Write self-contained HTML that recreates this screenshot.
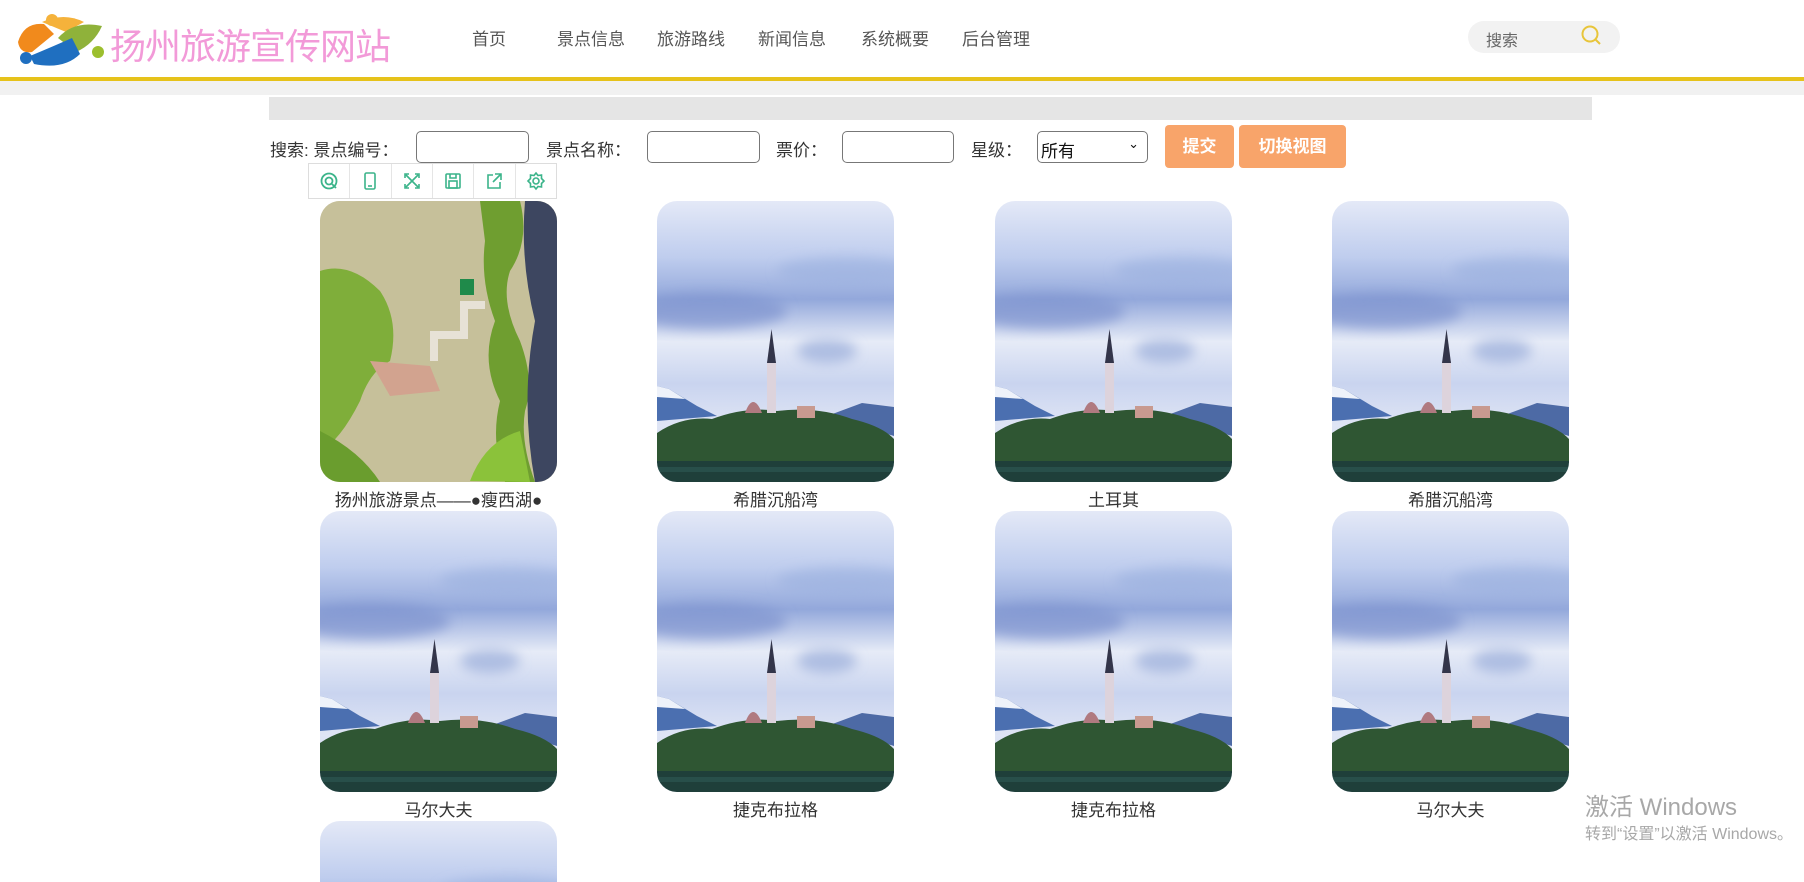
<!DOCTYPE html>
<html style="width:1804px;height:882px;overflow:hidden"><head><meta charset="utf-8"><style>
*{margin:0;padding:0;box-sizing:border-box}
html,body{width:1804px;height:882px;overflow:hidden}
body{background:#fff;font-family:"Liberation Sans","Noto Sans CJK SC",sans-serif;position:relative;color:#333}
.a{position:absolute}
.nav{top:25px;font-size:17px;color:#555}
.lbl{top:136px;font-size:17px;color:#333}
.inp{top:131px;height:32px;border:1px solid #777;border-radius:5px;background:#fff}
.btn{top:125px;height:43px;background:#f8a46a;color:#fff;font-weight:bold;font-size:17px;border-radius:4px;text-align:center;line-height:43px}
.card{width:237px;height:281px;border-radius:20px;overflow:hidden}
.cap{width:237px;text-align:center;font-size:17px;color:#333}
.tb{top:163px;left:308px;width:249px;height:36px;border:1px solid #ddd;background:#fff;display:flex}
.tb div{flex:1;border-right:1px solid #e5e5e5;display:flex;align-items:center;justify-content:center}
.tb div:last-child{border-right:none}
</style></head><body>
<svg width="0" height="0" style="position:absolute">
<defs>
<linearGradient id="sky" x1="0" y1="0" x2="0" y2="1">
<stop offset="0" stop-color="#e4e9f7"/><stop offset="0.2" stop-color="#bfcdee"/><stop offset="0.35" stop-color="#93a8db"/><stop offset="0.5" stop-color="#e6ebf7"/><stop offset="0.65" stop-color="#c9d4ef"/><stop offset="0.8" stop-color="#dfe5f5"/><stop offset="1" stop-color="#c3cfee"/>
</linearGradient>
<filter id="bl"><feGaussianBlur stdDeviation="6"/></filter>
<symbol id="lake" viewBox="0 0 237 281" preserveAspectRatio="none">
<rect width="237" height="281" fill="url(#sky)"/>
<g filter="url(#bl)">
<ellipse cx="50" cy="110" rx="80" ry="18" fill="#7d93cf" opacity=".7"/>
<ellipse cx="190" cy="70" rx="70" ry="14" fill="#9bb0df" opacity=".6"/>
<ellipse cx="170" cy="150" rx="30" ry="12" fill="#8ea3d6" opacity=".6"/>
</g>
<path d="M0 185 L12 188 L40 205 L60 215 L0 220Z" fill="#4b6fb0"/>
<path d="M0 185 L12 188 L28 198 L0 196Z" fill="#eef2fa"/>
<path d="M170 215 L205 202 L237 206 L237 235 Z" fill="#4d6aa5"/>
<path d="M0 232 Q25 215 55 218 Q90 205 120 210 Q160 205 195 218 Q225 225 237 238 L237 262 L0 262Z" fill="#2f5633"/>
<rect x="110" y="160" width="9" height="52" fill="#ddd3dc"/>
<path d="M110 162 L114.5 128 L119 162Z" fill="#33354a"/>
<path d="M88 212 Q96 190 105 212Z" fill="#b07a80"/>
<rect x="140" y="205" width="18" height="12" fill="#c89a90"/>
<rect x="0" y="260" width="237" height="21" fill="#1f3f3a"/>
<rect x="0" y="266" width="237" height="5" fill="#2e5a55" opacity=".6"/>
</symbol>
</defs></svg>

<svg class="a" style="left:14px;top:12px" width="94" height="58" viewBox="0 0 94 58">
<path d="M4 30 Q10 10 30 12 L40 22 L18 40 Q6 42 4 30Z" fill="#f18a1c"/>
<path d="M28 10 Q50 0 70 10 L52 20Z" fill="#f5b23b"/>
<path d="M44 26 Q60 8 88 14 Q80 32 62 40Z" fill="#8fb23a"/>
<path d="M16 44 Q40 34 58 26 L66 42 Q50 58 20 52Z" fill="#1f6fc0"/>
<circle cx="12" cy="46" r="6" fill="#1f6fc0"/><circle cx="84" cy="40" r="6" fill="#9cbf2e"/><circle cx="38" cy="8" r="6" fill="#f5b23b"/>
</svg>
<div class="a" style="left:110px;top:18px;font-size:36px;color:#f29ad8;letter-spacing:-1px">扬州旅游宣传网站</div>
<div class="a nav" style="left:472px">首页</div>
<div class="a nav" style="left:557px">景点信息</div>
<div class="a nav" style="left:657px">旅游路线</div>
<div class="a nav" style="left:758px">新闻信息</div>
<div class="a nav" style="left:861px">系统概要</div>
<div class="a nav" style="left:962px">后台管理</div>
<div class="a" style="left:1468px;top:21px;width:152px;height:32px;border-radius:16px;background:#f2f2f2"></div>
<div class="a" style="left:1486px;top:27px;font-size:16px;color:#666">搜索</div>
<svg class="a" style="left:1580px;top:24px" width="24" height="24" viewBox="0 0 24 24"><circle cx="10" cy="10" r="7.5" fill="none" stroke="#e8c53a" stroke-width="2"/><path d="M15.5 15.5 L20 20" stroke="#e8c53a" stroke-width="2"/></svg>
<div class="a" style="left:0;top:77px;width:1804px;height:4px;background:#e6c21a"></div>
<div class="a" style="left:0;top:81px;width:1804px;height:14px;background:#f1f1f1"></div>
<div class="a" style="left:269px;top:97px;width:1323px;height:23px;background:#e5e5e5"></div>

<div class="a lbl" style="left:270px">搜索: 景点编号：</div>
<div class="a inp" style="left:416px;width:113px"></div>
<div class="a lbl" style="left:546px">景点名称：</div>
<div class="a inp" style="left:647px;width:113px"></div>
<div class="a lbl" style="left:776px">票价：</div>
<div class="a inp" style="left:842px;width:112px"></div>
<div class="a lbl" style="left:971px">星级：</div>
<div class="a inp" style="left:1037px;width:111px;font-size:17px;padding:5px 3px;color:#111">所有<span style="position:absolute;right:8px;top:4px;font-size:13px">⌄</span></div>
<div class="a btn" style="left:1165px;width:69px">提交</div>
<div class="a btn" style="left:1239px;width:107px">切换视图</div>

<div class="a tb">
<div><svg width="20" height="20" viewBox="0 0 20 20" fill="none" stroke="#3bb48a" stroke-width="1.8"><circle cx="10" cy="10" r="7.5"/><circle cx="10" cy="10" r="3.5"/><path d="M13 13 L17 17"/></svg></div>
<div><svg width="20" height="20" viewBox="0 0 20 20" fill="none" stroke="#3bb48a" stroke-width="1.6"><rect x="5" y="2" width="10" height="16" rx="1.5"/><path d="M8 15 H12"/></svg></div>
<div><svg width="20" height="20" viewBox="0 0 20 20" fill="none" stroke="#3bb48a" stroke-width="1.6"><path d="M3 7 V3 H7 M13 3 H17 V7 M17 13 V17 H13 M7 17 H3 V13 M4 4 L16 16 M16 4 L4 16"/></svg></div>
<div><svg width="20" height="20" viewBox="0 0 20 20" fill="none" stroke="#3bb48a" stroke-width="1.6"><rect x="3" y="3" width="14" height="14" rx="1"/><rect x="6" y="10" width="8" height="7"/><path d="M7 3 V7 H13 V3"/></svg></div>
<div><svg width="20" height="20" viewBox="0 0 20 20" fill="none" stroke="#3bb48a" stroke-width="1.6"><path d="M9 4 H4 V17 H16 V11 M11 3 H17 V9 M17 3 L9 11"/></svg></div>
<div><svg width="20" height="20" viewBox="0 0 20 20" fill="none" stroke="#3bb48a" stroke-width="1.6"><circle cx="10" cy="10" r="3"/><path d="M10 2 L12 4.5 L15.5 4 L15.5 7.5 L18 10 L15.5 12.5 L15.5 16 L12 15.5 L10 18 L8 15.5 L4.5 16 L4.5 12.5 L2 10 L4.5 7.5 L4.5 4 L8 4.5Z"/></svg></div>
</div>

<div class="a card" style="left:320px;top:201px;background:#c9c39e">
<svg width="237" height="281" viewBox="0 0 237 281">
<rect width="237" height="281" fill="#c6c09a"/>
<path d="M0 70 Q30 60 60 90 Q80 120 70 160 Q50 170 40 200 Q20 240 0 250Z" fill="#7fae3a"/>
<path d="M160 0 L200 0 Q210 40 190 70 Q180 100 200 140 Q215 180 205 210 Q200 240 215 281 L185 281 Q170 240 180 200 Q160 160 175 120 Q160 80 165 40Z" fill="#6f9e30"/>
<path d="M205 0 L237 0 L237 281 L215 281 Q200 200 215 120 Q200 60 205 0Z" fill="#3d4660"/>
<path d="M0 230 Q40 250 60 281 L0 281Z" fill="#6a9d2e"/>
<path d="M50 160 L110 165 L120 190 L70 195Z" fill="#d2a38f"/>
<path d="M110 130 L140 130 L140 100 L165 100 L165 108 L148 108 L148 138 L118 138 L118 160 L110 160Z" fill="#e7e2d6"/>
<rect x="140" y="78" width="14" height="16" fill="#1f8a4a"/>
<path d="M150 280 Q165 240 200 230 L210 281Z" fill="#8bc23a"/>
</svg></div>
<svg class="a card" style="left:657px;top:201px"><use href="#lake" width="237" height="281"/></svg>
<svg class="a card" style="left:995px;top:201px"><use href="#lake" width="237" height="281"/></svg>
<svg class="a card" style="left:1332px;top:201px"><use href="#lake" width="237" height="281"/></svg>
<div class="a cap" style="left:320px;top:486px">扬州旅游景点——●瘦西湖●</div>
<div class="a cap" style="left:657px;top:486px">希腊沉船湾</div>
<div class="a cap" style="left:995px;top:486px">土耳其</div>
<div class="a cap" style="left:1332px;top:486px">希腊沉船湾</div>

<svg class="a card" style="left:320px;top:511px"><use href="#lake" width="237" height="281"/></svg>
<svg class="a card" style="left:657px;top:511px"><use href="#lake" width="237" height="281"/></svg>
<svg class="a card" style="left:995px;top:511px"><use href="#lake" width="237" height="281"/></svg>
<svg class="a card" style="left:1332px;top:511px"><use href="#lake" width="237" height="281"/></svg>
<div class="a cap" style="left:320px;top:796px">马尔大夫</div>
<div class="a cap" style="left:657px;top:796px">捷克布拉格</div>
<div class="a cap" style="left:995px;top:796px">捷克布拉格</div>
<div class="a cap" style="left:1332px;top:796px">马尔大夫</div>

<div class="a" style="left:320px;top:821px;width:237px;height:61px;overflow:hidden;border-radius:20px 20px 0 0"><svg width="237" height="281"><use href="#lake" width="237" height="281"/></svg></div>

<div class="a" style="left:1585px;top:787px;font-size:24px;color:#a8a8a8">激活 Windows</div>
<div class="a" style="left:1585px;top:820px;font-size:16px;color:#a8a8a8;white-space:nowrap">转到“设置”以激活 Windows。</div>
</body></html>
